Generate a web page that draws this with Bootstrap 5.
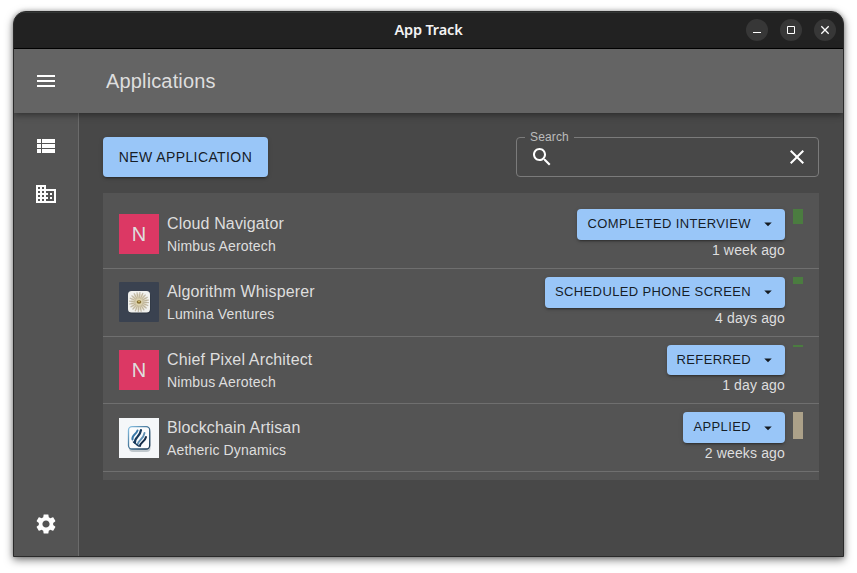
<!DOCTYPE html>
<html lang="en" data-bs-theme="dark">
<head>
<meta charset="utf-8">
<title>App Track</title>
<meta name="viewport" content="width=device-width, initial-scale=1">
<link href="https://cdn.jsdelivr.net/npm/bootstrap@5.3.0/dist/css/bootstrap.min.css" rel="stylesheet">
<style>
body{background:#fff;font-family:"Liberation Sans",Arial,sans-serif;color:#dedede;height:573px;padding:11px 13px 16px;overflow:hidden}
.app-window{width:831px;height:546px;border:1px solid #2a2a2a;border-radius:13px 13px 0 0;overflow:hidden;background:#484848;box-shadow:0 3px 8px rgba(0,0,0,.5),0 0 4px rgba(0,0,0,.25)}
.title-bar{height:37px;background:#222;border-bottom:1px solid #000;box-shadow:inset 0 1px #323534;flex:none}
.title-text{font:600 14.5px "Noto Sans",sans-serif;color:#f4f4f4;letter-spacing:-.15px;padding-bottom:2px}
.win-controls{right:7px;top:7px;gap:12px}
.win-btn{width:22px;height:22px;border-radius:50%;background:#373737;border:0;padding:0}
.win-btn svg{display:block}
.app-bar{height:64px;background:#646464;flex:none;z-index:2;box-shadow:0 2px 4px -1px rgba(0,0,0,.2),0 4px 5px rgba(0,0,0,.14),0 1px 10px rgba(0,0,0,.12);padding-left:20px}
.app-title{font-size:20px;line-height:32px;letter-spacing:.15px;font-weight:400;margin:0 0 0 48px;color:#dedede}
.icon24{width:24px;height:24px;fill:#fff;display:block;flex:none}
.side-rail{width:65px;background:#545454;border-right:1px solid #6b6b6b;padding:9px 0 8px}
.rail-link{height:48px;padding:12px 20px;display:block}
.work-area{padding:24px}
.btn-sky{--bs-btn-color:rgba(0,0,0,.87);--bs-btn-bg:#99c6f8;--bs-btn-border-color:#99c6f8;--bs-btn-hover-bg:#86b8ef;--bs-btn-hover-color:#111;border:0;border-radius:4px;box-shadow:0 3px 1px -2px rgba(0,0,0,.2),0 2px 2px rgba(0,0,0,.14),0 1px 5px rgba(0,0,0,.12);text-transform:uppercase;white-space:nowrap}
.btn-new{width:165px;height:40px;padding:0;font-size:14px;line-height:24.5px;letter-spacing:.4px}
.btn-status{padding:4px 10px;font-size:13px;line-height:22.75px;letter-spacing:.371px}
.btn-status svg{width:18px;height:18px;margin:0 -2px 0 8px;fill:currentColor}
.search-field{width:303px;height:45px;margin:-5px 0 0;border:1px solid #7b7b7b;border-radius:4px;padding:0 9px 0 8px}
.search-field legend{float:none;width:auto;font-size:12px;line-height:11px;height:11px;margin:0;padding:0 5px;letter-spacing:.14px;color:#bcbcbc}
.search-inner{height:28px;padding:0 0 0 5px}
.search-inner input{background:none;border:0;outline:0;min-width:0;color:#fff}
.job-list{margin-top:16px;background:#545454;padding:8px 0;height:287px}
.job-row{height:67.77px;padding:8px 16px;border-bottom:1px solid #6f6f6f}
.logo-tile{width:40px;height:40px;font-size:20px;flex:none;margin-right:8px}
.tile-pink{background:#dc3864}
.job-name{font-size:16px;line-height:24px;letter-spacing:.15px}
.job-firm,.job-age{font-size:14px;line-height:20px;letter-spacing:.15px}
.score{width:10px;margin:0 0 0 8px;background:#4b7c40}
.score.aging{background:#aca189}
</style>
</head>
<body>
<div class="app-window d-flex flex-column">
  <header class="title-bar position-relative d-flex align-items-center justify-content-center">
    <span class="title-text">App Track</span>
    <div class="win-controls position-absolute d-flex">
      <button class="win-btn" aria-label="Minimize"><svg width="22" height="22"><path d="M7 13.5h8" stroke="#fff"/></svg></button>
      <button class="win-btn" aria-label="Maximize"><svg width="22" height="22"><path d="M7.5 7.5h7v7h-7z" stroke="#fff" fill="none"/></svg></button>
      <button class="win-btn" aria-label="Close"><svg width="22" height="22"><path d="M7.3 7.3l7.4 7.4M14.7 7.3l-7.4 7.4" stroke="#fff" stroke-width="1.3"/></svg></button>
    </div>
  </header>
  <nav class="app-bar position-relative d-flex align-items-center">
    <svg class="icon24" viewBox="0 0 24 24"><path d="M3 18h18v-2H3v2zm0-5h18v-2H3v2zm0-7v2h18V6H3z"/></svg>
    <h1 class="app-title">Applications</h1>
  </nav>
  <div class="d-flex flex-grow-1">
    <aside class="side-rail d-flex flex-column flex-shrink-0">
      <a class="rail-link" href="#" aria-label="Applications"><svg class="icon24" viewBox="0 0 24 24"><path d="M3 14h4v-4H3v4zm0 5h4v-4H3v4zM3 9h4V5H3v4zm5 5h13v-4H8v4zm0 5h13v-4H8v4zM8 5v4h13V5H8z"/></svg></a>
      <a class="rail-link" href="#" aria-label="Companies"><svg class="icon24" viewBox="0 0 24 24"><path d="M12 7V3H2v18h20V7H12zM6 19H4v-2h2v2zm0-4H4v-2h2v2zm0-4H4V9h2v2zm0-4H4V5h2v2zm4 12H8v-2h2v2zm0-4H8v-2h2v2zm0-4H8V9h2v2zm0-4H8V5h2v2zm10 12h-8v-2h2v-2h-2v-2h2v-2h-2V9h8v10zm-2-8h-2v2h2v-2zm0 4h-2v2h2v-2z"/></svg></a>
      <a class="rail-link mt-auto" href="#" aria-label="Settings"><svg class="icon24" viewBox="0 0 24 24"><path d="M19.14 12.94c.04-.3.06-.61.06-.94 0-.32-.02-.64-.07-.94l2.03-1.58c.18-.14.23-.41.12-.61l-1.92-3.32c-.12-.22-.37-.29-.59-.22l-2.39.96c-.5-.38-1.03-.7-1.62-.94l-.36-2.54c-.04-.24-.24-.41-.48-.41h-3.84c-.24 0-.43.17-.47.41l-.36 2.54c-.59.24-1.13.57-1.62.94l-2.39-.96c-.22-.08-.47 0-.59.22L2.74 8.87c-.12.21-.08.47.12.61l2.03 1.58c-.05.3-.09.63-.09.94s.02.64.07.94l-2.03 1.58c-.18.14-.23.41-.12.61l1.92 3.32c.12.22.37.29.59.22l2.39-.96c.5.38 1.03.7 1.62.94l.36 2.54c.05.24.24.41.48.41h3.84c.24 0 .44-.17.47-.41l.36-2.54c.59-.24 1.13-.56 1.62-.94l2.39.96c.22.08.47 0 .59-.22l1.92-3.32c.12-.22.07-.47-.12-.61l-2.01-1.58zM12 15.6c-1.98 0-3.6-1.62-3.6-3.6s1.62-3.6 3.6-3.6 3.6 1.62 3.6 3.6-1.62 3.6-3.6 3.6z"/></svg></a>
    </aside>
    <main class="work-area flex-grow-1">
      <div class="d-flex justify-content-between align-items-start">
        <button class="btn btn-sky btn-new">New Application</button>
        <fieldset class="search-field">
          <legend>Search</legend>
          <div class="search-inner d-flex align-items-center">
            <svg class="icon24" viewBox="0 0 24 24"><path d="M15.5 14h-.79l-.28-.27C15.41 12.59 16 11.11 16 9.5 16 5.91 13.09 3 9.5 3S3 5.91 3 9.5 5.91 16 9.5 16c1.61 0 3.09-.59 4.23-1.57l.27.28v.79l5 4.99L20.49 19l-4.99-5zm-6 0C7.01 14 5 11.99 5 9.5S7.01 5 9.5 5 14 7.01 14 9.5 11.99 14 9.5 14z"/></svg>
            <input class="flex-grow-1" type="text" aria-label="Search">
            <svg class="icon24" viewBox="0 0 24 24"><path d="M19 6.41L17.59 5 12 10.59 6.41 5 5 6.41 10.59 12 5 17.59 6.41 19 12 13.41 17.59 19 19 17.59 13.41 12z"/></svg>
          </div>
        </fieldset>
      </div>
      <section class="job-list">
        <div class="job-row d-flex align-items-center">
          <div class="logo-tile tile-pink d-flex align-items-center justify-content-center">N</div>
          <div class="flex-grow-1"><div class="job-name">Cloud Navigator</div><div class="job-firm">Nimbus Aerotech</div></div>
          <div class="d-flex flex-column align-items-end">
            <button class="btn btn-sky btn-status d-flex align-items-center">Completed Interview<svg viewBox="0 0 24 24"><path d="M7 10l5 5 5-5z"/></svg></button>
            <div class="job-age">1 week ago</div>
          </div>
          <div class="score align-self-start" style="height:15px"></div>
        </div>
        <div class="job-row d-flex align-items-center">
          <svg class="logo-tile" viewBox="0 0 40 40">
            <defs><radialGradient id="sunGlow"><stop offset="0" stop-color="#b39b4e"/><stop offset=".35" stop-color="#d3c8a6"/><stop offset="1" stop-color="#e9e4d8"/></radialGradient></defs>
            <rect width="40" height="40" rx="1" fill="#3a4250"/>
            <rect x="9.5" y="10.500" width="22" height="21" rx="3.5" fill="#252b36" opacity=".6"/>
            <rect x="9" y="9" width="22" height="21.500" rx="3.5" fill="#f1f1ee"/>
            <circle cx="20" cy="20" r="8.500" fill="url(#sunGlow)"/>
            <circle cx="20" cy="20" r="6.700" fill="none" stroke="#a09478" stroke-width="6.500" stroke-dasharray=".9 1.205" opacity=".6"/>
            <circle cx="20" cy="20" r="3.400" fill="#dcd2ae"/>
            <ellipse cx="20" cy="20" rx="2.4" ry="1.8" fill="#857034"/><circle cx="20" cy="19.500" r=".8" fill="#e3cf7a"/>
          </svg>
          <div class="flex-grow-1"><div class="job-name">Algorithm Whisperer</div><div class="job-firm">Lumina Ventures</div></div>
          <div class="d-flex flex-column align-items-end">
            <button class="btn btn-sky btn-status d-flex align-items-center">Scheduled Phone Screen<svg viewBox="0 0 24 24"><path d="M7 10l5 5 5-5z"/></svg></button>
            <div class="job-age">4 days ago</div>
          </div>
          <div class="score align-self-start" style="height:7px"></div>
        </div>
        <div class="job-row d-flex align-items-center">
          <div class="logo-tile tile-pink d-flex align-items-center justify-content-center">N</div>
          <div class="flex-grow-1"><div class="job-name">Chief Pixel Architect</div><div class="job-firm">Nimbus Aerotech</div></div>
          <div class="d-flex flex-column align-items-end">
            <button class="btn btn-sky btn-status d-flex align-items-center">Referred<svg viewBox="0 0 24 24"><path d="M7 10l5 5 5-5z"/></svg></button>
            <div class="job-age">1 day ago</div>
          </div>
          <div class="score align-self-start" style="height:2px"></div>
        </div>
        <div class="job-row d-flex align-items-center">
          <svg class="logo-tile" viewBox="0 0 40 40">
            <defs><linearGradient id="frame" x2="1" y2="1"><stop offset="0" stop-color="#8cc4e6"/><stop offset=".5" stop-color="#3f6f92"/><stop offset="1" stop-color="#16324d"/></linearGradient></defs>
            <rect width="40" height="40" fill="#f5f7f9"/>
            <rect x="10" y="11" width="21.500" height="23" rx="4" fill="#aab3bb" opacity=".7"/>
            <rect x="9.500" y="8.700" width="21.200" height="22.300" rx="3.500" fill="#fbfcfd" stroke="url(#frame)" stroke-width="1.300"/>
            <g stroke-linecap="round" fill="none">
              <path d="M13.500 21.500c-1-4.500 3.500-4.500 5-9" stroke="#3a78a8" stroke-width="2"/>
              <path d="M16 24.500c-1-5 5-5 6-12.500" stroke="#17395c" stroke-width="2.200"/>
              <path d="M18.500 27c0-5 6-5 7-12" stroke="#5f8fb3" stroke-width="1.800"/>
              <path d="M21 28c0-4 5-4 6-9" stroke="#132b47" stroke-width="2"/>
              <path d="M14.500 24l5 4" stroke="#17395c" stroke-width="1.600"/>
            </g>
          </svg>
          <div class="flex-grow-1"><div class="job-name">Blockchain Artisan</div><div class="job-firm">Aetheric Dynamics</div></div>
          <div class="d-flex flex-column align-items-end">
            <button class="btn btn-sky btn-status d-flex align-items-center">Applied<svg viewBox="0 0 24 24"><path d="M7 10l5 5 5-5z"/></svg></button>
            <div class="job-age">2 weeks ago</div>
          </div>
          <div class="score aging align-self-start" style="height:27px"></div>
        </div>
      </section>
    </main>
  </div>
</div>
<script src="https://cdn.jsdelivr.net/npm/bootstrap@5.3.0/dist/js/bootstrap.bundle.min.js"></script>
</body>
</html>
